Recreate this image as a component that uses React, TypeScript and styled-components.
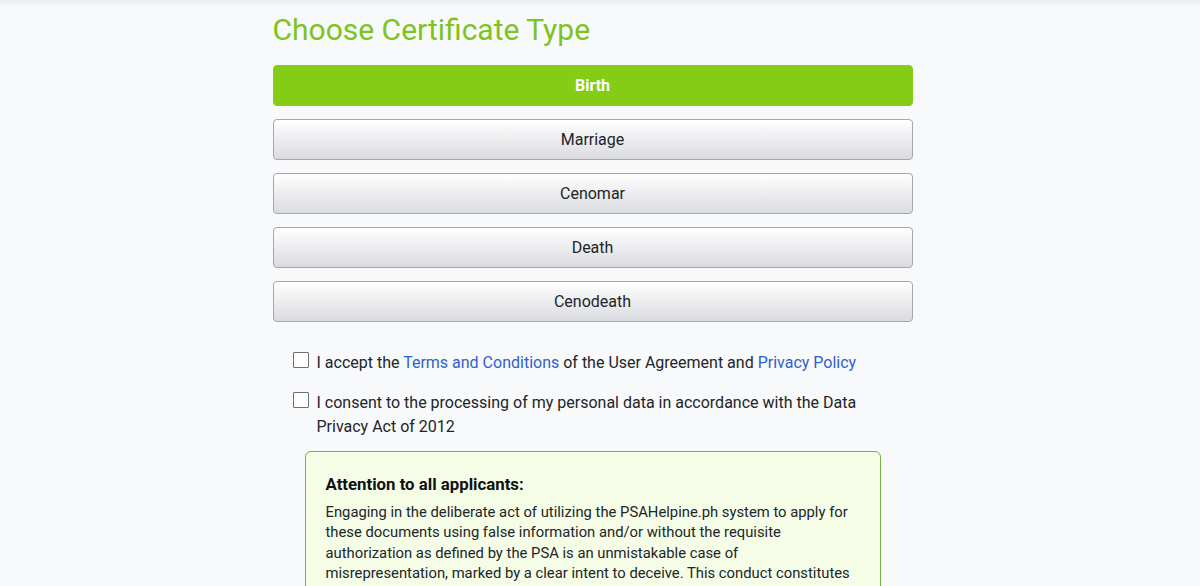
import React, { useState } from "react";
import styled, { createGlobalStyle } from "styled-components";

const certificateTypes = ["Birth", "Marriage", "Cenomar", "Death", "Cenodeath"];

const GlobalStyle = createGlobalStyle`
  html, body {
    margin: 0;
    padding: 0;
    background: #f8f9fa;
    font-family: Roboto, "Liberation Sans", Arial, sans-serif;
    color: #212529;
  }
`;

export default function App() {
  const [selected, setSelected] = useState("Birth");
  const [terms, setTerms] = useState(false);
  const [consent, setConsent] = useState(false);

  return (
    <>
      <GlobalStyle />
      <StyledPage>
        <StyledTopShade />
        <StyledContent>
          <StyledTitle>Choose Certificate Type</StyledTitle>
          <StyledTypeList>
            {certificateTypes.map((type) => (
              <StyledTypeButton
                key={type}
                type="button"
                $active={selected === type}
                onClick={() => setSelected(type)}
              >
                {type}
              </StyledTypeButton>
            ))}
          </StyledTypeList>

          <StyledAgreements>
            <StyledCheckRow>
              <StyledCheckbox
                type="checkbox"
                checked={terms}
                onChange={(e) => setTerms(e.target.checked)}
              />
              <span>
                I accept the <StyledLink href="#">Terms and Conditions</StyledLink>{" "}
                of the User Agreement and{" "}
                <StyledLink href="#">Privacy Policy</StyledLink>
              </span>
            </StyledCheckRow>
            <StyledCheckRow>
              <StyledCheckbox
                type="checkbox"
                checked={consent}
                onChange={(e) => setConsent(e.target.checked)}
              />
              <span>
                I consent to the processing of my personal data in accordance
                with the Data Privacy Act of 2012
              </span>
            </StyledCheckRow>
          </StyledAgreements>

          <StyledNotice>
            <h4>Attention to all applicants:</h4>
            <p>
              Engaging in the deliberate act of utilizing the PSAHelpine.ph
              system to apply for these documents using false information
              and/or without the requisite authorization as defined by the PSA
              is an unmistakable case of misrepresentation, marked by a clear
              intent to deceive. This conduct constitutes a violation of the
              law and may result in criminal prosecution.
            </p>
          </StyledNotice>
        </StyledContent>
      </StyledPage>
    </>
  );
}

const StyledPage = styled.div`
  position: relative;
  height: 586px;
  padding-right: 15px;
  overflow: hidden;
`;

const StyledTopShade = styled.div`
  position: absolute;
  top: 0;
  left: 0;
  right: 0;
  height: 6px;
  background: linear-gradient(to bottom, rgba(0, 0, 0, 0.06), rgba(0, 0, 0, 0));
`;

const StyledContent = styled.main`
  width: 640px;
  margin: 0 auto;
  padding-top: 12px;
`;

const StyledTitle = styled.h2`
  margin: 0 0 17px;
  font-size: 30px;
  line-height: 36px;
  font-weight: 400;
  color: #7ec321;
`;

const StyledTypeList = styled.div`
  display: flex;
  flex-direction: column;
  gap: 13px;
`;

const StyledTypeButton = styled.button<{ $active: boolean }>`
  height: 41px;
  width: 100%;
  border-radius: 4px;
  font-family: inherit;
  font-size: 16px;
  cursor: pointer;
  border: 1px solid ${({ $active }) => ($active ? "#84cc16" : "#a3a7ae")};
  background: ${({ $active }) =>
    $active ? "#84cc16" : "linear-gradient(to bottom, #ffffff, #dadbe0)"};
  color: ${({ $active }) => ($active ? "#ffffff" : "#212529")};
  font-weight: ${({ $active }) => ($active ? 700 : 400)};
`;

const StyledAgreements = styled.div`
  display: flex;
  flex-direction: column;
  gap: 16px;
  margin-top: 29px;
  padding: 0 20px;
`;

const StyledCheckRow = styled.label`
  display: flex;
  align-items: flex-start;
  gap: 8px;
  font-size: 16px;
  line-height: 24px;
  color: #212529;
`;

const StyledCheckbox = styled.input`
  appearance: none;
  flex: 0 0 16px;
  width: 16px;
  height: 16px;
  margin: 1px 0 0;
  border: 1px solid #6b6f76;
  border-radius: 1px;
  background: #ffffff;
  cursor: pointer;

  &:checked {
    background: #84cc16;
    border-color: #84cc16;
  }
`;

const StyledLink = styled.a`
  color: #2f5fd0;
  text-decoration: none;
`;

const StyledNotice = styled.section`
  margin: 12px 32px 0 32px;
  padding: 20px 24px 24px 20px;
  border: 1px solid #79b23a;
  border-radius: 6px;
  background: #f5fde7;

  h4 {
    margin: 0 0 6px;
    font-size: 16.8px;
    line-height: 24px;
    font-weight: 700;
    color: #111;
  }

  p {
    margin: 0;
    font-size: 14.8px;
    line-height: 20.3px;
    color: #212529;
  }
`;
